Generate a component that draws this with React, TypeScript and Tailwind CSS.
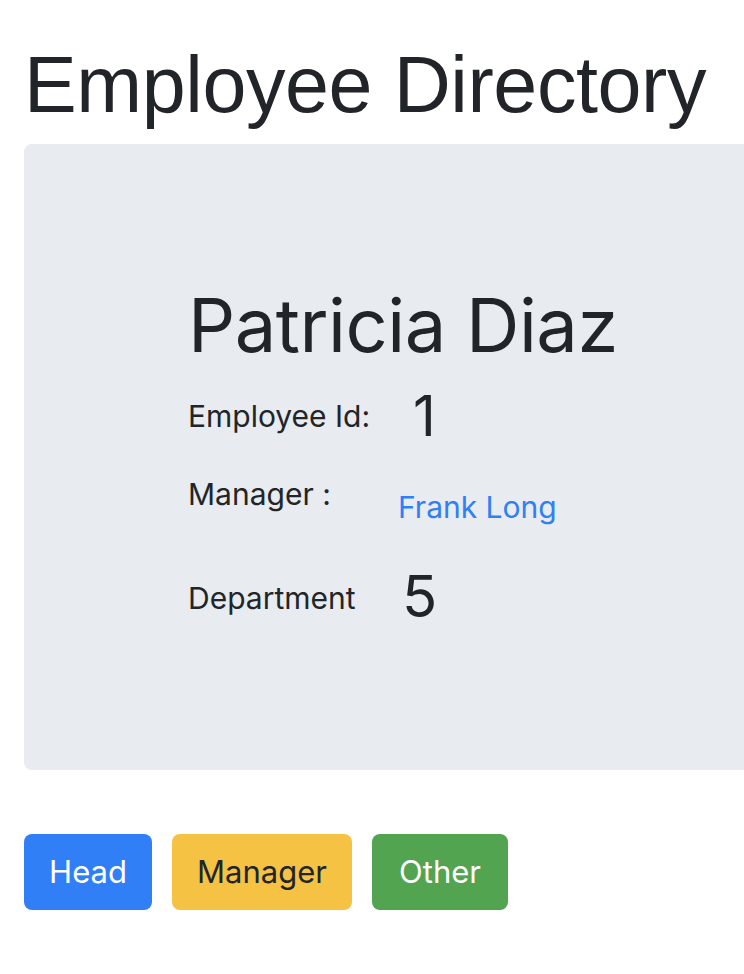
const buttons = [
  { label: "Head", cls: "bg-[#307ff7] text-white w-[128px]" },
  { label: "Manager", cls: "bg-[#f5c244] text-[#212529] w-[180px]" },
  { label: "Other", cls: "bg-[#52a451] text-white w-[136px]" },
];

export default function App() {
  return (
    <div className="w-[744px] h-[974px] overflow-hidden bg-white text-[#212529] font-['Inter','Liberation_Sans',sans-serif]">
      {/* Title */}
      <h1 className="pl-[24px] pt-[37px] text-[79px] leading-[96px] font-['Liberation_Sans',Arial,sans-serif] tracking-[-0.4px]">
        Employee Directory
      </h1>

      {/* Jumbotron */}
      <div className="mt-[11px] ml-[24px] w-[760px] h-[626px] rounded-l-[8px] bg-[#e8ebef] pl-[164px] pt-[136px]">
        <h2 className="text-[74px] leading-[90px] font-normal tracking-[-0.5px]">Patricia Diaz</h2>

        <div className="mt-[20px] flex items-end h-[54px]">
          <span className="w-[225px] text-[30px] leading-[36px] pb-[10px]">Employee Id:</span>
          <span className="text-[56px] leading-[56px]">1</span>
        </div>

        <div className="mt-[32px] flex items-start h-[40px]">
          <span className="w-[210px] text-[30px] leading-[36px]">Manager :</span>
          <span className="mt-[13px] text-[30px] leading-[36px] text-[#2f7ff6]">Frank Long</span>
        </div>

        <div className="mt-[52px] flex items-end h-[56px]">
          <span className="w-[214px] text-[30px] leading-[36px] pb-[8px]">Department</span>
          <span className="text-[58px] leading-[56px]">5</span>
        </div>
      </div>

      {/* Buttons */}
      <div className="mt-[64px] ml-[24px] flex gap-[20px]">
        {buttons.map((b) => (
          <button
            key={b.label}
            className={`h-[76px] rounded-[8px] text-[31px] leading-[36px] ${b.cls}`}
          >
            {b.label}
          </button>
        ))}
      </div>
    </div>
  );
}
